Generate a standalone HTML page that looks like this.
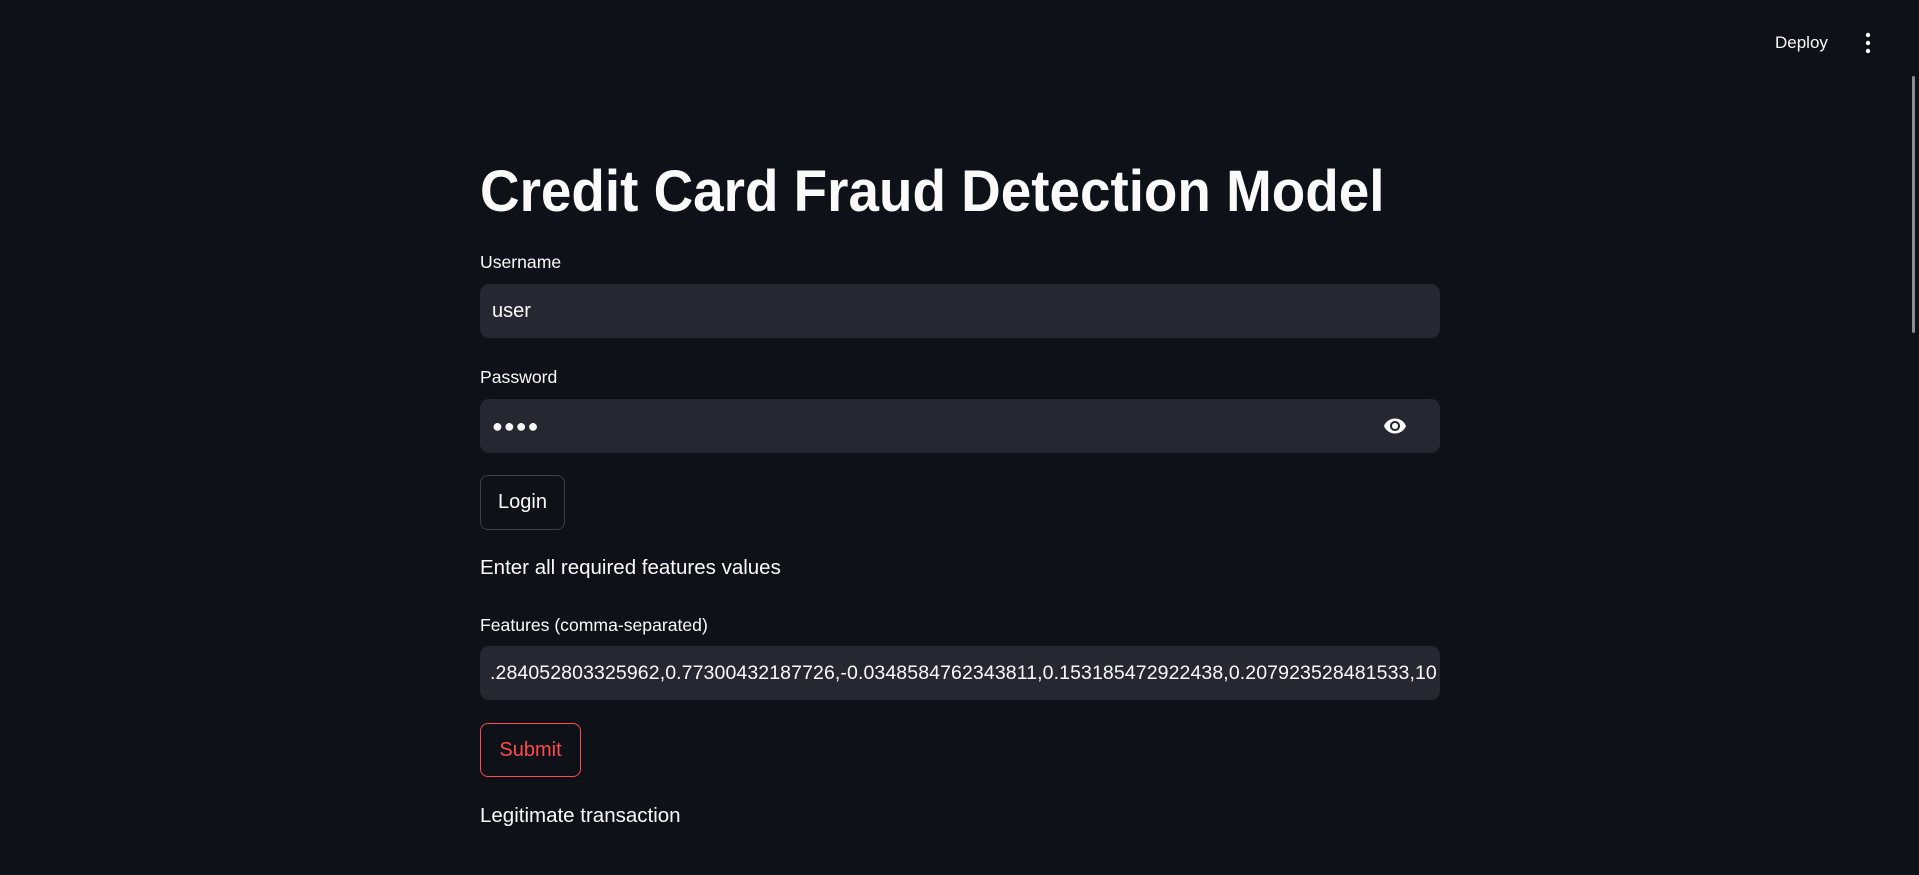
<!DOCTYPE html>
<html><head><meta charset="utf-8"><style>
html,body{margin:0;padding:0;width:1919px;height:875px;overflow:hidden;background:#0e1117;color:#fafafa;font-family:"Liberation Sans",sans-serif;}
.a{position:absolute;}
.t{left:480px;top:160px;font-weight:bold;font-size:58px;line-height:64px;white-space:nowrap;transform:scaleX(0.945);transform-origin:left top;}
.lbl{left:480px;font-size:17.6px;line-height:20px;}
.in{left:480px;width:960px;height:54px;background:#262730;border-radius:9px;}
.in span{position:absolute;left:12px;top:0;line-height:54px;font-size:20px;white-space:nowrap;}
.btn{left:480px;border:1px solid #3d404b;border-radius:8px;box-sizing:border-box;font-size:20px;text-align:center;}
.p{left:480px;font-size:20.5px;line-height:24px;}
</style></head><body>
<div class="a" style="left:1775px;top:33px;font-size:17px;line-height:20px;">Deploy</div>
<svg class="a" style="left:1860px;top:32px" width="16" height="22" viewBox="0 0 16 22"><circle cx="8" cy="3" r="2.2" fill="#fafafa"/><circle cx="8" cy="11" r="2.2" fill="#fafafa"/><circle cx="8" cy="19" r="2.2" fill="#fafafa"/></svg>
<div class="a" style="left:1912px;top:76px;width:3px;height:257px;background:#8b8d93;border-radius:2px;"></div>

<div class="a t">Credit Card Fraud Detection Model</div>

<div class="a lbl" style="top:252px;">Username</div>
<div class="a in" style="top:284px;"><span>user</span></div>

<div class="a lbl" style="top:367px;">Password</div>
<div class="a in" style="top:399px;"><span style="font-size:18px;letter-spacing:1px;">●●●●</span>
<svg class="a" style="left:902px;top:15px" width="26" height="24" viewBox="0 0 24 24"><path d="M12 4.5C7 4.5 2.7 7.6 1 12c1.7 4.4 6 7.5 11 7.5s9.3-3.1 11-7.5c-1.7-4.4-6-7.5-11-7.5zM12 17c-2.8 0-5-2.2-5-5s2.2-5 5-5 5 2.2 5 5-2.2 5-5 5zm0-8c-1.7 0-3 1.3-3 3s1.3 3 3 3 3-1.3 3-3-1.3-3-3-3z" fill="#fafafa"/></svg>
</div>

<div class="a btn" style="top:475px;width:85px;height:55px;line-height:53px;">Login</div>

<div class="a p" style="top:556px;">Enter all required features values</div>

<div class="a lbl" style="top:615px;">Features (comma-separated)</div>
<div class="a in" style="top:646px;overflow:hidden;"><span style="left:10px;font-size:19.5px;letter-spacing:0.1px;">.284052803325962,0.77300432187726,-0.0348584762343811,0.153185472922438,0.207923528481533,10</span></div>

<div class="a btn" style="top:723px;width:101px;height:54px;line-height:52px;border-color:#ff4b4b;color:#ff4b4b;">Submit</div>

<div class="a p" style="top:804px;">Legitimate transaction</div>
</body></html>
